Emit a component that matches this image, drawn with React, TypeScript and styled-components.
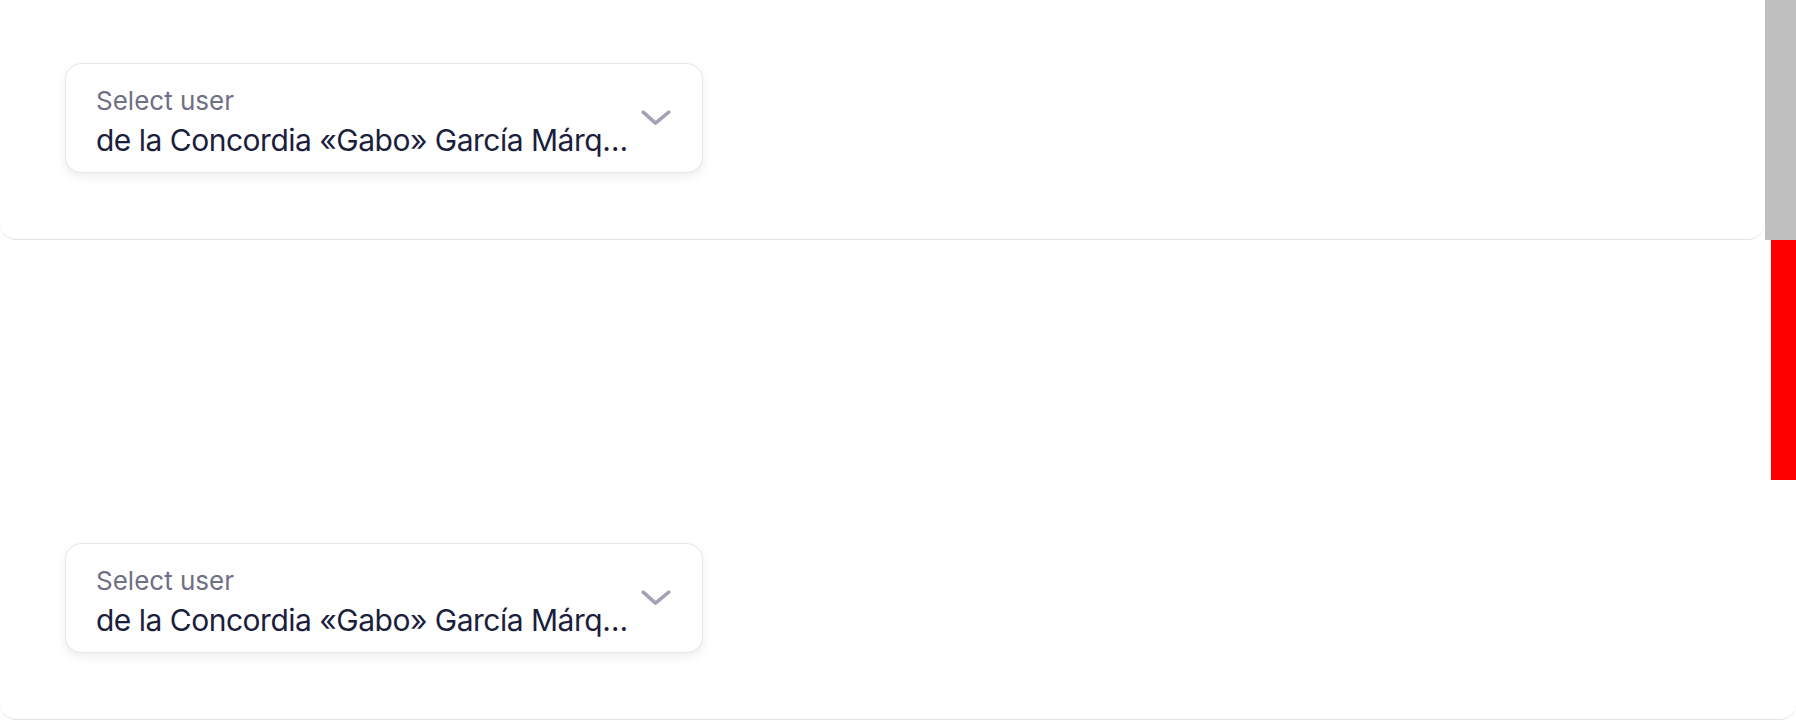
import { createGlobalStyle } from 'styled-components';
import styled from 'styled-components';

const GlobalStyle = createGlobalStyle`
  html, body {
    margin: 0;
    padding: 0;
    background: #ffffff;
  }
  body {
    font-family: Inter, 'Noto Sans', 'Liberation Sans', sans-serif;
    -webkit-font-smoothing: antialiased;
  }
  * {
    box-sizing: border-box;
  }
`;

const UserSelect = ({ label, value }: { label: string; value: string }) => (
  <Select_card>
    <div className='text'>
      <Label>{label}</Label>
      <Value title={value}>{value}</Value>
    </div>
    <svg className='chevron' width='30' height='17' viewBox='0 0 30 17' fill='none'>
      <polyline
        points='2.2,2.2 14.5,13.2 27.8,2.2'
        stroke='#a3a3b2'
        strokeWidth='3.6'
        strokeLinecap='round'
        strokeLinejoin='round'
      />
    </svg>
  </Select_card>
);

const App = () => {
  const user = 'de la Concordia «Gabo» García Márquez';

  return (
    <Page>
      <GlobalStyle />
      <Top_row>
        <Panel $height={239}>
          <UserSelect label='Select user' value={user} />
        </Panel>
        <Scroll_track />
      </Top_row>
      <Panel $height={479}>
        <Red_block />
        <UserSelect label='Select user' value={user} />
      </Panel>
    </Page>
  );
};

const Page = styled.div`
  display: flex;
  flex-direction: column;
  width: 1796px;
`;

const Top_row = styled.div`
  display: flex;
  height: 240px;
`;

const Panel = styled.div<{ $height: number }>`
  flex: 1 1 auto;
  display: flex;
  flex-direction: column;
  align-items: flex-start;
  height: ${(p) => p.$height + 1}px;
  padding: 63px 0 0 65px;
  background: #ffffff;
  border-bottom: 1px solid #e4e4e4;
  border-radius: 0 0 16px 16px;
`;

const Scroll_track = styled.div`
  width: 31px;
  margin-left: 1px;
  background: #bfbfbf;
`;

const Red_block = styled.div`
  align-self: flex-end;
  flex-shrink: 0;
  width: 25px;
  height: 240px;
  margin-top: -63px;
  margin-bottom: 63px;
  background: #ff0000;
`;

const Select_card = styled.div`
  display: flex;
  flex-shrink: 0;
  align-items: flex-start;
  width: 638px;
  height: 110px;
  padding: 0 31px 0 30px;
  background: #ffffff;
  border: 1px solid #e6e6ea;
  border-radius: 16px;
  box-shadow: 0 4px 10px rgba(20, 20, 40, 0.07);

  .text {
    flex: 1;
    min-width: 0;
    padding-top: 20px;
    margin-right: 8px;
  }

  .chevron {
    align-self: center;
    flex-shrink: 0;
  }
`;

const Label = styled.div`
  font-size: 26px;
  line-height: 34px;
  color: #6f6f86;
  white-space: nowrap;
`;

const Value = styled.div`
  margin-top: 3px;
  font-size: 30px;
  line-height: 38px;
  color: #1b1e3c;
  letter-spacing: -0.5px;
  white-space: nowrap;
  overflow: hidden;
  text-overflow: ellipsis;
`;

export default App;
